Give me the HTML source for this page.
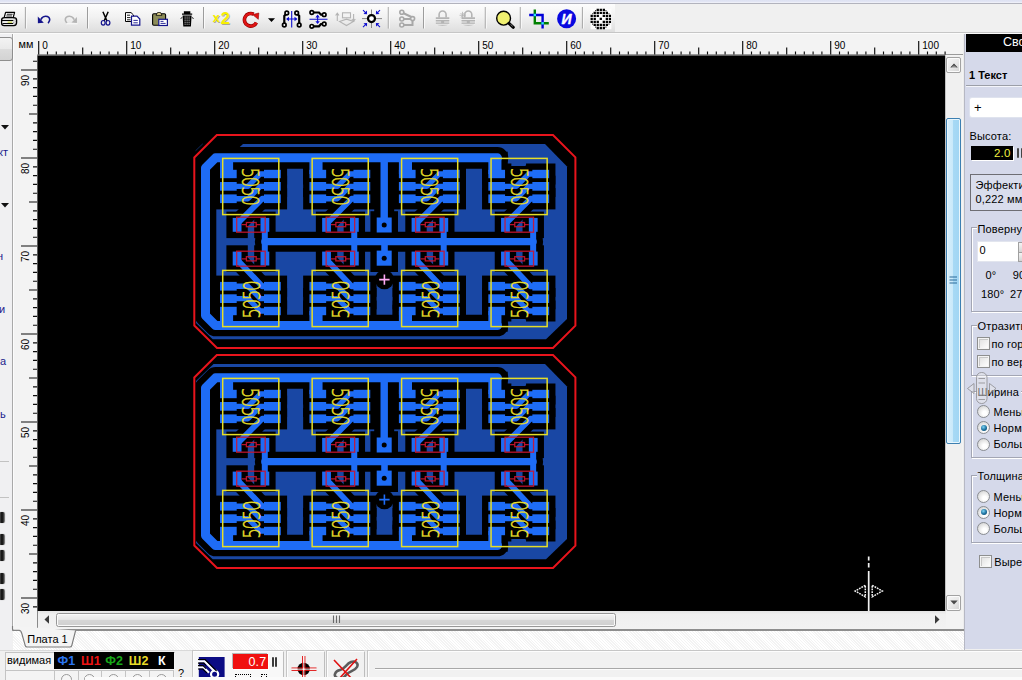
<!DOCTYPE html>
<html lang="ru"><head><meta charset="utf-8"><title>Sprint-Layout</title>
<style>
html,body{margin:0;padding:0}
body{width:1022px;height:680px;overflow:hidden;position:relative;background:#f0f0f0;font-family:"Liberation Sans",sans-serif;font-size:11px;color:#000}
.abs{position:absolute}
#top0{left:0;top:0;width:1022px;height:3px;background:linear-gradient(#dde1f2,#e2e5f4 50%,#f3f4fa)}
#top1{left:0;top:2.8px;width:1022px;height:1px;background:#b2b3bd}
#tb{left:0;top:4px;width:615px;height:28px;background:linear-gradient(#fdfdfd,#f2f2f2 45%,#dedede)}
#tbline{left:0;top:32px;width:1022px;height:1px;background:#c6c6c6}
#tbline2{left:0;top:33px;width:1022px;height:1px;background:#fbfbfb}
#left{left:0;top:34px;width:12px;height:616px;background:#f0f0f2}
#leftline{left:12px;top:34px;width:1px;height:597px;background:#a9a9a9}
#leftline2{left:13px;top:34px;width:1px;height:596px;background:#fcfcfc}
#rul{left:14px;top:34px;width:950px;height:596px;background:#f3f3f3}
#lbtn{left:-3px;top:37px;width:14px;height:22px;border:1px solid #8e8e8e;border-radius:3px;background:linear-gradient(#f3f3f3,#e9e9e9 50%,#dcdcdc 51%,#d3d3d3)}
.nv{color:#1c1c8c}

#rp{left:965px;top:34px;width:57px;height:615px;background:#d5d9ea}
#rpl{left:964px;top:34px;width:1px;height:616px;background:#b6b8c4}
#rpl0{left:963px;top:34px;width:1px;height:616px;background:#ececec}
#rpt{left:966px;top:34px;width:56px;height:18px;background:#000;color:#fff;font-size:12.5px;line-height:17px;white-space:nowrap;overflow:hidden}
#rpt span{position:absolute;left:37px;top:0}
.rl{position:absolute;white-space:nowrap;font-size:11px;line-height:13px;letter-spacing:0.15px}
.gb{position:absolute;border:1px solid #a3a6b4;box-shadow:1px 1px 0 #fff, inset 1px 1px 0 #fff;border-right:none}
.gl{position:absolute;background:#d5d9ea;padding:0 2px 0 1px;white-space:nowrap;font-size:11px;line-height:13px;letter-spacing:0.15px}
.cb{position:absolute;width:11px;height:11px;border:1px solid #8e8f8f;background:linear-gradient(135deg,#dcdcdc,#f6f6f6 70%,#fff);box-shadow:inset 0 0 0 1px #f4f4f4, inset 2px 2px 0 0 #c8c8c8}
.rb{position:absolute;width:11px;height:11px;border-radius:50%;border:1px solid #8a8d92;background:radial-gradient(circle at 60% 65%,#fff 20%,#e4e4e4 60%,#c4c4c4)}
.rb.on:after{content:"";position:absolute;left:2.5px;top:2.5px;width:6px;height:6px;border-radius:50%;background:radial-gradient(circle at 40% 35%,#7fd4f4,#1a6e9c 55%,#0c3c5c)}
#vs{left:946px;top:56px;width:16px;height:555px;background:#f0f0f0}
.sbtn{position:absolute;border:1px solid #a2a2a2;border-radius:2px;background:linear-gradient(135deg,#f6f6f6,#e9e9e9 50%,#d2d2d2);box-shadow:inset 0 0 0 1px #fbfbfb}
#vth{left:946px;top:118px;width:13px;height:324px;border:1px solid #3c7fb1;border-radius:2px;background:linear-gradient(90deg,#d9effc,#c9e9fa 45%,#a7d9f5 50%,#a0d5f3);box-shadow:inset 0 0 0 1px #e8f6fd}
#hs{left:38px;top:611px;width:908px;height:17px;background:linear-gradient(#e4e4e4,#f0f0f0 20%,#f2f2f2)}
#hth{left:56px;top:612.5px;width:558px;height:12.5px;border:1px solid #979797;border-radius:2.5px;background:linear-gradient(#f4f4f4,#e8e8e8 45%,#d6d6d6 52%,#cfcfcf);box-shadow:inset 0 0 0 1px #fafafa}
#frm{left:13px;top:629px;width:951px;height:1.5px;background:#8e8e8e}
#tabs{left:13px;top:630.5px;width:951px;height:19.5px;background:repeating-linear-gradient(45deg,#ffffff 0,#ffffff 1px,#f3f3f3 1px,#f3f3f3 2px)}
#bot{left:0;top:650px;width:1022px;height:30px;background:#f0f0f0}
.bx{position:absolute;top:651px;height:30px;border:1px solid #fdfdfd;border-right-color:#bdbdbd;box-shadow:-1px -1px 0 #c6c6c6;background:#f1f1f1}
</style></head>
<body>
<div class="abs" id="top0"></div><div class="abs" id="top1"></div><div class="abs" id="tb"></div><div class="abs" id="tbline"></div><div class="abs" id="tbline2"></div>
<svg class="abs" style="left:0;top:0" width="640" height="36" viewBox="0 0 640 36"><path d="M25.4,7V28.5" stroke="#9c9c9c" stroke-width="1"/><path d="M26.4,7V28.5" stroke="#fafafa" stroke-width="1"/><path d="M87.5,7V28.5" stroke="#9c9c9c" stroke-width="1"/><path d="M88.5,7V28.5" stroke="#fafafa" stroke-width="1"/><path d="M203.5,7V28.5" stroke="#9c9c9c" stroke-width="1"/><path d="M204.5,7V28.5" stroke="#fafafa" stroke-width="1"/><path d="M388.3,7V28.5" stroke="#9c9c9c" stroke-width="1"/><path d="M389.3,7V28.5" stroke="#fafafa" stroke-width="1"/><path d="M423.5,7V28.5" stroke="#9c9c9c" stroke-width="1"/><path d="M424.5,7V28.5" stroke="#fafafa" stroke-width="1"/><path d="M485.3,7V28.5" stroke="#9c9c9c" stroke-width="1"/><path d="M486.3,7V28.5" stroke="#fafafa" stroke-width="1"/><path d="M520.3,7V28.5" stroke="#9c9c9c" stroke-width="1"/><path d="M521.3,7V28.5" stroke="#fafafa" stroke-width="1"/><path d="M582.4,7V28.5" stroke="#9c9c9c" stroke-width="1"/><path d="M583.4,7V28.5" stroke="#fafafa" stroke-width="1"/><g stroke="#000" stroke-linejoin="round"><path d="M4.2,17.5L5.6,12.4H14.6L13.2,17.5Z" fill="#fff" stroke-width="1.2"/><path d="M6.8,14.3H12.6M6.3,16H12" stroke="#222" stroke-width="1.1"/><path d="M1.6,20.2C1.6,18.4 2.8,17.6 4.4,17.6H13.4C15.4,17.6 16.6,18.4 16.6,20V22.6C16.6,24.6 15.6,25.6 13.8,25.6H4.2C2.4,25.6 1.6,24.6 1.6,23Z" fill="#e4e4e4" stroke-width="1.3"/><path d="M1.8,20.6H13.2M2.6,23.4H13.2" fill="none" stroke-width="1.1"/><path d="M13.4,18.5L16,19.5M13.4,20.5L16.2,21.5M13.4,22.5L16,23.5" stroke="#777" stroke-width="0.8" stroke-dasharray="0.9 0.7"/></g><rect x="2.6" y="21.3" width="10.4" height="1.5" fill="#fff"/><rect x="7.6" y="21.6" width="4.6" height="1.1" fill="#c8d838"/><path d="M40.8,19.6C42,16.8 45,15.7 47.4,16.6C50,17.6 50.7,20.4 48.1,23.2" fill="none" stroke="#14148c" stroke-width="1.6"/><path d="M37.8,16.6L43.8,22.7L37.9,23.2Z" fill="#14148c"/><path d="M74.2,19.6C73,16.8 70,15.7 67.6,16.6C65,17.6 64.3,20.4 66.9,23.2" fill="none" stroke="#b4b4b4" stroke-width="1.6"/><path d="M77,17L71.5,22.6L76.9,23Z" fill="#b4b4b4"/><path d="M66,23.8H77.5" stroke="#fff" stroke-width="0.8"/><path d="M102.9,11.8L107,21M108.2,11.8L104.1,21" stroke="#000" stroke-width="1.5" fill="none"/><ellipse cx="103.2" cy="22.8" rx="1.9" ry="2.3" fill="none" stroke="#14148c" stroke-width="1.2"/><ellipse cx="108" cy="22.8" rx="1.9" ry="2.3" fill="none" stroke="#14148c" stroke-width="1.2"/><path d="M125.5,12.6H131L133.5,15V21.5H125.5Z" fill="#fff" stroke="#000" stroke-width="1"/><path d="M127,15.2H130M127,17.6H130.5M127,19.8H130.5" stroke="#000" stroke-width="0.9"/><path d="M131.5,16.2H137L139.8,19V25.2H131.5Z" fill="#fff" stroke="#14148c" stroke-width="1.2"/><path d="M133.4,20.4H137.8M133.4,22.8H137.8" stroke="#14148c" stroke-width="0.9"/><rect x="152.6" y="13.8" width="13" height="11.4" rx="1.2" fill="#8c8c58" stroke="#000" stroke-width="1.1"/><path d="M156,15.3L157.5,12.6H160.6L162,15.3Z" fill="#e8d890" stroke="#000" stroke-width="0.8"/><rect x="158.8" y="19.3" width="8.6" height="6.2" fill="#fff" stroke="#14148c" stroke-width="1.2"/><path d="M160.5,21.4H163.5M160.5,23.4H165.6" stroke="#14148c" stroke-width="0.9"/><path d="M182,14.2H192.2M184.5,12H189.7V14H184.5Z" stroke="#000" stroke-width="1.3" fill="#000"/><path d="M182.6,15.5H191.6L190.9,26.6H183.3Z" fill="#000"/><path d="M185.1,16.5V25.5M187.1,16.5V25.5M189.1,16.5V25.5" stroke="#d8d8d8" stroke-width="0.8" stroke-dasharray="1.2 0.6"/><path d="M180.6,18.5L182.3,17.5M193.6,18.5L191.9,17.5" stroke="#000" stroke-width="0.9"/><text font-family="Liberation Sans, sans-serif" font-weight="bold" fill="#a8a898"><tspan x="213.6" y="23.2" font-size="12.5px">x</tspan><tspan x="221.6" y="24.8" font-size="16.5px">2</tspan></text><text font-family="Liberation Sans, sans-serif" font-weight="bold" fill="#f8f000"><tspan x="212.8" y="22.4" font-size="12.5px">x</tspan><tspan x="220.8" y="24.0" font-size="16.5px">2</tspan></text><path d="M256.4,22.6A6.3,6.3 0 1 1 253.6,14.2" fill="none" stroke="#900000" stroke-width="3.6"/><path d="M256.4,22.6A6.3,6.3 0 1 1 253.6,14.2" fill="none" stroke="#e01414" stroke-width="2.4"/><path d="M252.6,14.6L258.8,13L258.3,19.3Z" fill="#e01414" stroke="#900000" stroke-width="0.6"/><path d="M268,18.2H275L271.5,22Z" fill="#000"/><g fill="none" stroke="#000" stroke-width="2.2"><path d="M286.5,13.5L284.3,16V25M297,13.5L299.2,16V25"/></g><circle cx="286.8" cy="13.0" r="1.8" fill="#fff" stroke="#000" stroke-width="1.7"/><circle cx="284.3" cy="25.0" r="1.8" fill="#fff" stroke="#000" stroke-width="1.7"/><circle cx="296.7" cy="13.0" r="1.8" fill="#fff" stroke="#000" stroke-width="1.7"/><circle cx="299.2" cy="25.0" r="1.8" fill="#fff" stroke="#000" stroke-width="1.7"/><path d="M291.7,11V27.5M287,19H296.5" stroke="#1010d0" stroke-width="1.1"/><path d="M286,19L289,16.8V21.2ZM297.5,19L294.5,16.8V21.2Z" fill="#1010d0"/><g fill="none" stroke="#000" stroke-width="2.2"><path d="M311.5,12.5H319L321,14.7H324M311.5,26.3H319L321,24H324"/></g><circle cx="311.8" cy="12.5" r="1.8" fill="#fff" stroke="#000" stroke-width="1.7"/><circle cx="324.2" cy="14.7" r="1.8" fill="#fff" stroke="#000" stroke-width="1.7"/><circle cx="311.8" cy="26.3" r="1.8" fill="#fff" stroke="#000" stroke-width="1.7"/><circle cx="324.2" cy="24.0" r="1.8" fill="#fff" stroke="#000" stroke-width="1.7"/><path d="M309.5,19.3H327.5M317.6,15.5V23" stroke="#1010d0" stroke-width="1.1"/><path d="M317.6,14.6L315.4,17.4H319.8ZM317.6,24L315.4,21.2H319.8Z" fill="#1010d0"/><g fill="none" stroke="#b4b4b4" stroke-width="1.1"><rect x="342.5" y="12.8" width="8" height="5"/><path d="M339.5,21.5L346.5,19.2L353.5,21.5L346.5,25.5Z"/><path d="M337.3,21V13.5M335.6,15.5L337.3,13.2L339,15.5M353.6,14V20.5M351.9,19L353.6,21.3L355.3,19"/></g><path d="M371.5,9.5V28M362,18.6H382" stroke="#888" stroke-width="1"/><circle cx="371.5" cy="18.6" r="3.5" fill="#fff" stroke="#000" stroke-width="2.2"/><path d="M363.0,10.1L366.5,13.6" stroke="#1010d0" stroke-width="1.1"/><path d="M367.1,14.2L363.5,14.0L366.9,10.6Z" fill="#1010d0"/><path d="M380.0,10.1L376.5,13.6" stroke="#1010d0" stroke-width="1.1"/><path d="M375.9,14.2L379.5,14.0L376.1,10.6Z" fill="#1010d0"/><path d="M363.0,27.1L366.5,23.6" stroke="#1010d0" stroke-width="1.1"/><path d="M367.1,23.0L363.5,23.2L366.9,26.6Z" fill="#1010d0"/><path d="M380.0,27.1L376.5,23.6" stroke="#1010d0" stroke-width="1.1"/><path d="M375.9,23.0L379.5,23.2L376.1,26.6Z" fill="#1010d0"/><g fill="none" stroke="#a8a8a8" stroke-width="2"><path d="M402,12.5L412.5,17.5V25H402M402,19H410"/></g><circle cx="401.8" cy="12.3" r="2" fill="#f0f0f0" stroke="#a8a8a8" stroke-width="1.6"/><circle cx="401.8" cy="19.0" r="2" fill="#f0f0f0" stroke="#a8a8a8" stroke-width="1.6"/><circle cx="401.8" cy="25.0" r="2" fill="#f0f0f0" stroke="#a8a8a8" stroke-width="1.6"/><circle cx="412.6" cy="18.6" r="2" fill="#f0f0f0" stroke="#a8a8a8" stroke-width="1.6"/><path d="M439.1,17.5V14.5A3.2,3.2 0 0 1 446.1,14.5V17.5" fill="none" stroke="#b4b4b4" stroke-width="1.6"/><path d="M435.8,17.3H449.3V23.5C447.3,26.5 437.8,26.5 435.8,23.5Z" fill="#b4b4b4"/><path d="M435.3,19.5H450.3M435.3,22H450.3M436.3,24.3H449.3" stroke="#f4f4f4" stroke-width="0.9"/><rect x="441.1" y="20.5" width="3" height="2.6" fill="#b4b4b4"/><path d="M464.8,17.5V14.5A3.2,3.2 0 0 1 471.8,14.5V17.5" fill="none" stroke="#b4b4b4" stroke-width="1.6"/><path d="M461.5,17.3H475.0V23.5C473.0,26.5 463.5,26.5 461.5,23.5Z" fill="#b4b4b4"/><path d="M461.0,19.5H476.0M461.0,22H476.0M462.0,24.3H475.0" stroke="#f4f4f4" stroke-width="0.9"/><rect x="466.8" y="20.5" width="3" height="2.6" fill="#b4b4b4"/><path d="M460.5,13L464.5,17M464.5,12.5L461,17.5M459.5,15.3H465.5M462.5,11.8V18.3" stroke="#b4b4b4" stroke-width="0.8"/><circle cx="503.6" cy="18.2" r="6.9" fill="#f0f070" stroke="#000" stroke-width="1.4"/><path d="M509,23.3L513.3,27.3" stroke="#000" stroke-width="3" stroke-linecap="round"/><path d="M510.5,24.3L512.7,26.3" stroke="#aaa" stroke-width="0.8"/><path d="M534.8,9.5V23.3H548.8" fill="none" stroke="#008000" stroke-width="2.4"/><path d="M529.2,15H542.6V28.5" fill="none" stroke="#0000d8" stroke-width="2.4"/><rect x="533.6" y="13.8" width="2.4" height="2.4" fill="#30e8f0"/><rect x="541.4" y="22.1" width="2.4" height="2.4" fill="#30e8f0"/><circle cx="566.6" cy="18.8" r="9.5" fill="#0808e0"/><text x="566.6" y="24" text-anchor="middle" font-family="Liberation Sans, sans-serif" font-weight="bold" font-style="italic" font-size="14px" fill="#fff" stroke="#fff" stroke-width="0.4">И</text><rect x="590.6" y="8.6" width="20.8" height="20.6" fill="#fdfdfd"/><path d="M596.61,8.65h2.3v2.3h-2.3zM599.64,8.65h2.3v2.3h-2.3zM602.67,8.65h2.3v2.3h-2.3zM593.58,11.68h2.3v2.3h-2.3zM596.61,11.68h2.3v2.3h-2.3zM599.64,11.68h2.3v2.3h-2.3zM602.67,11.68h2.3v2.3h-2.3zM605.70,11.68h2.3v2.3h-2.3zM590.55,14.71h2.3v2.3h-2.3zM593.58,14.71h2.3v2.3h-2.3zM596.61,14.71h2.3v2.3h-2.3zM602.67,14.71h2.3v2.3h-2.3zM605.70,14.71h2.3v2.3h-2.3zM608.73,14.71h2.3v2.3h-2.3zM590.55,17.74h2.3v2.3h-2.3zM593.58,17.74h2.3v2.3h-2.3zM599.64,17.74h2.3v2.3h-2.3zM605.70,17.74h2.3v2.3h-2.3zM608.73,17.74h2.3v2.3h-2.3zM590.55,20.77h2.3v2.3h-2.3zM593.58,20.77h2.3v2.3h-2.3zM596.61,20.77h2.3v2.3h-2.3zM602.67,20.77h2.3v2.3h-2.3zM605.70,20.77h2.3v2.3h-2.3zM608.73,20.77h2.3v2.3h-2.3zM593.58,23.80h2.3v2.3h-2.3zM596.61,23.80h2.3v2.3h-2.3zM599.64,23.80h2.3v2.3h-2.3zM602.67,23.80h2.3v2.3h-2.3zM605.70,23.80h2.3v2.3h-2.3zM596.61,26.83h2.3v2.3h-2.3zM599.64,26.83h2.3v2.3h-2.3zM602.67,26.83h2.3v2.3h-2.3z" fill="#000"/><path d="M595.03,10.10h1.2v1.2h-1.2zM605.35,10.10h1.2v1.2h-1.2zM592.00,13.13h1.2v1.2h-1.2zM608.38,13.13h1.2v1.2h-1.2zM592.00,23.45h1.2v1.2h-1.2zM608.38,23.45h1.2v1.2h-1.2zM595.03,26.48h1.2v1.2h-1.2zM605.35,26.48h1.2v1.2h-1.2z" fill="#444"/></svg>
<div class="abs" id="rul"></div><div class="abs" style="left:36.5px;top:54.3px;width:926px;height:1.2px;background:#9a9a9a"></div><div class="abs" style="left:36.5px;top:54.3px;width:1px;height:575px;background:#b0b0b0"></div>
<div class="abs" id="left"></div><div class="abs" id="leftline"></div><div class="abs" id="leftline2"></div><div class="abs" id="lbtn"></div><svg class="abs" style="left:1px;top:124.5px" width="8" height="5"><path d="M0,0H8L4,4.5Z" fill="#111"/></svg><svg class="abs" style="left:1px;top:202.5px" width="8" height="5"><path d="M0,0H8L4,4.5Z" fill="#111"/></svg><div class="abs nv" style="left:-2px;top:146px;font-size:11px">кт</div><div class="abs nv" style="left:-3px;top:250px;font-size:11px">н</div><div class="abs nv" style="left:-1px;top:303px;font-size:11px">и</div><div class="abs nv" style="left:0px;top:355px;font-size:11px">а</div><div class="abs nv" style="left:0px;top:408px;font-size:11px">ь</div><div class="abs" style="left:0;top:461px;width:9px;height:1px;background:#c2c2c2"></div><div class="abs" style="left:0;top:497px;width:9px;height:1px;background:#c2c2c2"></div><div class="abs" style="left:-1px;top:512.3px;width:5.5px;height:11px;border-radius:2px;background:linear-gradient(90deg,#8a8a8a,#2a2a2a 30%,#0c0c0c 50%,#3a3a3a 75%,#9a9a9a);box-shadow:0 0 1px #888"></div><div class="abs" style="left:-1px;top:533.5px;width:5.5px;height:11px;border-radius:2px;background:linear-gradient(90deg,#8a8a8a,#2a2a2a 30%,#0c0c0c 50%,#3a3a3a 75%,#9a9a9a);box-shadow:0 0 1px #888"></div><div class="abs" style="left:-1px;top:550.4px;width:5.5px;height:11px;border-radius:2px;background:linear-gradient(90deg,#8a8a8a,#2a2a2a 30%,#0c0c0c 50%,#3a3a3a 75%,#9a9a9a);box-shadow:0 0 1px #888"></div><div class="abs" style="left:-1px;top:573px;width:5.5px;height:11px;border-radius:2px;background:linear-gradient(90deg,#8a8a8a,#2a2a2a 30%,#0c0c0c 50%,#3a3a3a 75%,#9a9a9a);box-shadow:0 0 1px #888"></div><div class="abs" style="left:-1px;top:589px;width:5.5px;height:11px;border-radius:2px;background:linear-gradient(90deg,#8a8a8a,#2a2a2a 30%,#0c0c0c 50%,#3a3a3a 75%,#9a9a9a);box-shadow:0 0 1px #888"></div>
<svg id="pcb" width="909" height="556" viewBox="37 55 909 556" style="position:absolute;left:37px;top:55px"><rect x="37.5" y="55.4" width="907.7" height="555.6" fill="#000"/><style>
.clr path{fill:none;stroke:#000;stroke-linecap:round;stroke-linejoin:round}
.clr .pc{fill:#000;stroke:#000;stroke-width:12.6;stroke-linejoin:miter}
.cu path{fill:none;stroke:#1e6cf6;stroke-linecap:round;stroke-linejoin:round}
.cu .pp{fill:#1e6cf6}
.rs{fill:none;stroke:#cc1430;stroke-width:1.3;opacity:0.9}
.yb{fill:none;stroke:#e6de28;stroke-width:1.5}
.lt{font-family:"DejaVu Sans Light","DejaVu Sans","Liberation Sans",sans-serif;font-weight:200;font-size:23.4px;letter-spacing:-2px;fill:#e6de28;stroke:#e6de28;stroke-width:0.55}
</style><g><polygon points="243,144 545,144 567,166.5 567,319 546,339.3 212.7,339.3 196,323 196,187.5" fill="#1947a4"/>
<g class="clr"><path d="M497.5,157.85 L215.5,157.85 L205.5,167.85 L205.5,315.55 L215.5,325.55 L497.5,325.55" stroke-width="21.6"/><rect x="220" y="158" width="13.1" height="16" class="pc"/><rect x="231.9" y="166" width="34" height="38" fill="#000" stroke="none"/><rect x="220" y="169.8" width="16.7" height="8.4" class="pc"/><rect x="264" y="169.8" width="16.8" height="8.4" class="pc"/><rect x="220" y="182" width="16.7" height="8.7" class="pc"/><rect x="264" y="182" width="16.8" height="8.7" class="pc"/><rect x="220" y="194.4" width="16.7" height="8.7" class="pc"/><rect x="264" y="194.4" width="16.8" height="8.7" class="pc"/><path d="M235.9,186.35 L248,186.35 L260.3,174 L266.9,174" stroke-width="17.9"/><path d="M235.9,198.75 L248,198.75 L260.3,186.35 L266.9,186.35" stroke-width="17.9"/><path d="M267.9,198.75 L262.2,198.75 L236.7,224.25" stroke-width="18.4"/><rect x="232.7" y="217.9" width="8.8" height="13.9" class="pc"/><rect x="260.5" y="217.9" width="8.8" height="13.9" class="pc"/><rect x="220" y="311" width="13.1" height="14.4" class="pc"/><rect x="231.9" y="281" width="34" height="38" fill="#000" stroke="none"/><rect x="220" y="306.8" width="16.7" height="8.4" class="pc"/><rect x="264" y="306.8" width="16.8" height="8.4" class="pc"/><rect x="220" y="294.3" width="16.7" height="8.7" class="pc"/><rect x="264" y="294.3" width="16.8" height="8.7" class="pc"/><rect x="220" y="281.9" width="16.7" height="8.7" class="pc"/><rect x="264" y="281.9" width="16.8" height="8.7" class="pc"/><path d="M235.9,298.65 L248,298.65 L260.3,311 L266.9,311" stroke-width="17.9"/><path d="M235.9,286.25 L248,286.25 L260.3,298.65 L266.9,298.65" stroke-width="17.9"/><path d="M267.9,286.25 L262.2,286.25 L236.7,259.15" stroke-width="18.4"/><rect x="232.7" y="251.6" width="8.8" height="13.9" class="pc"/><rect x="260.5" y="251.6" width="8.8" height="13.9" class="pc"/><path d="M264.8,224.8 L264.8,258.6" stroke-width="18.6"/><rect x="309.45" y="158" width="13.1" height="16" class="pc"/><rect x="321.35" y="166" width="34" height="38" fill="#000" stroke="none"/><rect x="309.45" y="169.8" width="16.7" height="8.4" class="pc"/><rect x="353.45" y="169.8" width="16.8" height="8.4" class="pc"/><rect x="309.45" y="182" width="16.7" height="8.7" class="pc"/><rect x="353.45" y="182" width="16.8" height="8.7" class="pc"/><rect x="309.45" y="194.4" width="16.7" height="8.7" class="pc"/><rect x="353.45" y="194.4" width="16.8" height="8.7" class="pc"/><path d="M325.35,186.35 L337.45,186.35 L349.75,174 L356.35,174" stroke-width="17.9"/><path d="M325.35,198.75 L337.45,198.75 L349.75,186.35 L356.35,186.35" stroke-width="17.9"/><path d="M357.35,198.75 L351.65,198.75 L326.15,224.25" stroke-width="18.4"/><rect x="322.15" y="217.9" width="8.8" height="13.9" class="pc"/><rect x="349.95" y="217.9" width="8.8" height="13.9" class="pc"/><rect x="309.45" y="311" width="13.1" height="14.4" class="pc"/><rect x="321.35" y="281" width="34" height="38" fill="#000" stroke="none"/><rect x="309.45" y="306.8" width="16.7" height="8.4" class="pc"/><rect x="353.45" y="306.8" width="16.8" height="8.4" class="pc"/><rect x="309.45" y="294.3" width="16.7" height="8.7" class="pc"/><rect x="353.45" y="294.3" width="16.8" height="8.7" class="pc"/><rect x="309.45" y="281.9" width="16.7" height="8.7" class="pc"/><rect x="353.45" y="281.9" width="16.8" height="8.7" class="pc"/><path d="M325.35,298.65 L337.45,298.65 L349.75,311 L356.35,311" stroke-width="17.9"/><path d="M325.35,286.25 L337.45,286.25 L349.75,298.65 L356.35,298.65" stroke-width="17.9"/><path d="M357.35,286.25 L351.65,286.25 L326.15,259.15" stroke-width="18.4"/><rect x="322.15" y="251.6" width="8.8" height="13.9" class="pc"/><rect x="349.95" y="251.6" width="8.8" height="13.9" class="pc"/><path d="M354.25,224.8 L354.25,258.6" stroke-width="18.6"/><rect x="398.9" y="158" width="13.1" height="16" class="pc"/><rect x="410.8" y="166" width="34" height="38" fill="#000" stroke="none"/><rect x="398.9" y="169.8" width="16.7" height="8.4" class="pc"/><rect x="442.9" y="169.8" width="16.8" height="8.4" class="pc"/><rect x="398.9" y="182" width="16.7" height="8.7" class="pc"/><rect x="442.9" y="182" width="16.8" height="8.7" class="pc"/><rect x="398.9" y="194.4" width="16.7" height="8.7" class="pc"/><rect x="442.9" y="194.4" width="16.8" height="8.7" class="pc"/><path d="M414.8,186.35 L426.9,186.35 L439.2,174 L445.8,174" stroke-width="17.9"/><path d="M414.8,198.75 L426.9,198.75 L439.2,186.35 L445.8,186.35" stroke-width="17.9"/><path d="M446.8,198.75 L441.1,198.75 L415.6,224.25" stroke-width="18.4"/><rect x="411.6" y="217.9" width="8.8" height="13.9" class="pc"/><rect x="439.4" y="217.9" width="8.8" height="13.9" class="pc"/><rect x="398.9" y="311" width="13.1" height="14.4" class="pc"/><rect x="410.8" y="281" width="34" height="38" fill="#000" stroke="none"/><rect x="398.9" y="306.8" width="16.7" height="8.4" class="pc"/><rect x="442.9" y="306.8" width="16.8" height="8.4" class="pc"/><rect x="398.9" y="294.3" width="16.7" height="8.7" class="pc"/><rect x="442.9" y="294.3" width="16.8" height="8.7" class="pc"/><rect x="398.9" y="281.9" width="16.7" height="8.7" class="pc"/><rect x="442.9" y="281.9" width="16.8" height="8.7" class="pc"/><path d="M414.8,298.65 L426.9,298.65 L439.2,311 L445.8,311" stroke-width="17.9"/><path d="M414.8,286.25 L426.9,286.25 L439.2,298.65 L445.8,298.65" stroke-width="17.9"/><path d="M446.8,286.25 L441.1,286.25 L415.6,259.15" stroke-width="18.4"/><rect x="411.6" y="251.6" width="8.8" height="13.9" class="pc"/><rect x="439.4" y="251.6" width="8.8" height="13.9" class="pc"/><path d="M443.7,224.8 L443.7,258.6" stroke-width="18.6"/><rect x="488.35" y="158" width="13.1" height="16" class="pc"/><rect x="500.25" y="166" width="34" height="38" fill="#000" stroke="none"/><rect x="488.35" y="169.8" width="16.7" height="8.4" class="pc"/><rect x="532.35" y="169.8" width="16.8" height="8.4" class="pc"/><rect x="488.35" y="182" width="16.7" height="8.7" class="pc"/><rect x="532.35" y="182" width="16.8" height="8.7" class="pc"/><rect x="488.35" y="194.4" width="16.7" height="8.7" class="pc"/><rect x="532.35" y="194.4" width="16.8" height="8.7" class="pc"/><path d="M504.25,186.35 L516.35,186.35 L528.65,174 L535.25,174" stroke-width="17.9"/><path d="M504.25,198.75 L516.35,198.75 L528.65,186.35 L535.25,186.35" stroke-width="17.9"/><path d="M536.25,198.75 L530.55,198.75 L505.05,224.25" stroke-width="18.4"/><rect x="501.05" y="217.9" width="8.8" height="13.9" class="pc"/><rect x="528.85" y="217.9" width="8.8" height="13.9" class="pc"/><rect x="488.35" y="311" width="13.1" height="14.4" class="pc"/><rect x="500.25" y="281" width="34" height="38" fill="#000" stroke="none"/><rect x="488.35" y="306.8" width="16.7" height="8.4" class="pc"/><rect x="532.35" y="306.8" width="16.8" height="8.4" class="pc"/><rect x="488.35" y="294.3" width="16.7" height="8.7" class="pc"/><rect x="532.35" y="294.3" width="16.8" height="8.7" class="pc"/><rect x="488.35" y="281.9" width="16.7" height="8.7" class="pc"/><rect x="532.35" y="281.9" width="16.8" height="8.7" class="pc"/><path d="M504.25,298.65 L516.35,298.65 L528.65,311 L535.25,311" stroke-width="17.9"/><path d="M504.25,286.25 L516.35,286.25 L528.65,298.65 L535.25,298.65" stroke-width="17.9"/><path d="M536.25,286.25 L530.55,286.25 L505.05,259.15" stroke-width="18.4"/><rect x="501.05" y="251.6" width="8.8" height="13.9" class="pc"/><rect x="528.85" y="251.6" width="8.8" height="13.9" class="pc"/><path d="M533.15,224.8 L533.15,258.6" stroke-width="18.6"/><path d="M264.8,241.7 L533.15,241.7" stroke-width="19.9"/><path d="M384.2,158 L384.2,225" stroke-width="20"/><rect x="376.7" y="217.5" width="15" height="15" class="pc"/><rect x="376.7" y="250.6" width="15" height="15.1" class="pc"/><path d="M384.5,241.7 L384.5,258" stroke-width="19.2"/><circle cx="384.4" cy="279.6" r="9.6" fill="#000" stroke="none"/></g>
<g class="cu"><path d="M497.5,157.85 L215.5,157.85 L205.5,167.85 L205.5,315.55 L215.5,325.55 L497.5,325.55" stroke-width="9"/><rect x="220" y="158" width="13.1" height="16" class="pp"/><rect x="220" y="169.8" width="16.7" height="8.4" class="pp"/><rect x="264" y="169.8" width="16.8" height="8.4" class="pp"/><rect x="220" y="182" width="16.7" height="8.7" class="pp"/><rect x="264" y="182" width="16.8" height="8.7" class="pp"/><rect x="220" y="194.4" width="16.7" height="8.7" class="pp"/><rect x="264" y="194.4" width="16.8" height="8.7" class="pp"/><path d="M235.9,186.35 L248,186.35 L260.3,174 L266.9,174" stroke-width="5.3"/><path d="M235.9,198.75 L248,198.75 L260.3,186.35 L266.9,186.35" stroke-width="5.3"/><path d="M267.9,198.75 L262.2,198.75 L236.7,224.25" stroke-width="5.8"/><rect x="232.7" y="217.9" width="8.8" height="13.9" class="pp"/><rect x="260.5" y="217.9" width="8.8" height="13.9" class="pp"/><rect x="220" y="311" width="13.1" height="14.4" class="pp"/><rect x="220" y="306.8" width="16.7" height="8.4" class="pp"/><rect x="264" y="306.8" width="16.8" height="8.4" class="pp"/><rect x="220" y="294.3" width="16.7" height="8.7" class="pp"/><rect x="264" y="294.3" width="16.8" height="8.7" class="pp"/><rect x="220" y="281.9" width="16.7" height="8.7" class="pp"/><rect x="264" y="281.9" width="16.8" height="8.7" class="pp"/><path d="M235.9,298.65 L248,298.65 L260.3,311 L266.9,311" stroke-width="5.3"/><path d="M235.9,286.25 L248,286.25 L260.3,298.65 L266.9,298.65" stroke-width="5.3"/><path d="M267.9,286.25 L262.2,286.25 L236.7,259.15" stroke-width="5.8"/><rect x="232.7" y="251.6" width="8.8" height="13.9" class="pp"/><rect x="260.5" y="251.6" width="8.8" height="13.9" class="pp"/><path d="M264.8,224.8 L264.8,258.6" stroke-width="6"/><rect x="309.45" y="158" width="13.1" height="16" class="pp"/><rect x="309.45" y="169.8" width="16.7" height="8.4" class="pp"/><rect x="353.45" y="169.8" width="16.8" height="8.4" class="pp"/><rect x="309.45" y="182" width="16.7" height="8.7" class="pp"/><rect x="353.45" y="182" width="16.8" height="8.7" class="pp"/><rect x="309.45" y="194.4" width="16.7" height="8.7" class="pp"/><rect x="353.45" y="194.4" width="16.8" height="8.7" class="pp"/><path d="M325.35,186.35 L337.45,186.35 L349.75,174 L356.35,174" stroke-width="5.3"/><path d="M325.35,198.75 L337.45,198.75 L349.75,186.35 L356.35,186.35" stroke-width="5.3"/><path d="M357.35,198.75 L351.65,198.75 L326.15,224.25" stroke-width="5.8"/><rect x="322.15" y="217.9" width="8.8" height="13.9" class="pp"/><rect x="349.95" y="217.9" width="8.8" height="13.9" class="pp"/><rect x="309.45" y="311" width="13.1" height="14.4" class="pp"/><rect x="309.45" y="306.8" width="16.7" height="8.4" class="pp"/><rect x="353.45" y="306.8" width="16.8" height="8.4" class="pp"/><rect x="309.45" y="294.3" width="16.7" height="8.7" class="pp"/><rect x="353.45" y="294.3" width="16.8" height="8.7" class="pp"/><rect x="309.45" y="281.9" width="16.7" height="8.7" class="pp"/><rect x="353.45" y="281.9" width="16.8" height="8.7" class="pp"/><path d="M325.35,298.65 L337.45,298.65 L349.75,311 L356.35,311" stroke-width="5.3"/><path d="M325.35,286.25 L337.45,286.25 L349.75,298.65 L356.35,298.65" stroke-width="5.3"/><path d="M357.35,286.25 L351.65,286.25 L326.15,259.15" stroke-width="5.8"/><rect x="322.15" y="251.6" width="8.8" height="13.9" class="pp"/><rect x="349.95" y="251.6" width="8.8" height="13.9" class="pp"/><path d="M354.25,224.8 L354.25,258.6" stroke-width="6"/><rect x="398.9" y="158" width="13.1" height="16" class="pp"/><rect x="398.9" y="169.8" width="16.7" height="8.4" class="pp"/><rect x="442.9" y="169.8" width="16.8" height="8.4" class="pp"/><rect x="398.9" y="182" width="16.7" height="8.7" class="pp"/><rect x="442.9" y="182" width="16.8" height="8.7" class="pp"/><rect x="398.9" y="194.4" width="16.7" height="8.7" class="pp"/><rect x="442.9" y="194.4" width="16.8" height="8.7" class="pp"/><path d="M414.8,186.35 L426.9,186.35 L439.2,174 L445.8,174" stroke-width="5.3"/><path d="M414.8,198.75 L426.9,198.75 L439.2,186.35 L445.8,186.35" stroke-width="5.3"/><path d="M446.8,198.75 L441.1,198.75 L415.6,224.25" stroke-width="5.8"/><rect x="411.6" y="217.9" width="8.8" height="13.9" class="pp"/><rect x="439.4" y="217.9" width="8.8" height="13.9" class="pp"/><rect x="398.9" y="311" width="13.1" height="14.4" class="pp"/><rect x="398.9" y="306.8" width="16.7" height="8.4" class="pp"/><rect x="442.9" y="306.8" width="16.8" height="8.4" class="pp"/><rect x="398.9" y="294.3" width="16.7" height="8.7" class="pp"/><rect x="442.9" y="294.3" width="16.8" height="8.7" class="pp"/><rect x="398.9" y="281.9" width="16.7" height="8.7" class="pp"/><rect x="442.9" y="281.9" width="16.8" height="8.7" class="pp"/><path d="M414.8,298.65 L426.9,298.65 L439.2,311 L445.8,311" stroke-width="5.3"/><path d="M414.8,286.25 L426.9,286.25 L439.2,298.65 L445.8,298.65" stroke-width="5.3"/><path d="M446.8,286.25 L441.1,286.25 L415.6,259.15" stroke-width="5.8"/><rect x="411.6" y="251.6" width="8.8" height="13.9" class="pp"/><rect x="439.4" y="251.6" width="8.8" height="13.9" class="pp"/><path d="M443.7,224.8 L443.7,258.6" stroke-width="6"/><rect x="488.35" y="158" width="13.1" height="16" class="pp"/><rect x="488.35" y="169.8" width="16.7" height="8.4" class="pp"/><rect x="532.35" y="169.8" width="16.8" height="8.4" class="pp"/><rect x="488.35" y="182" width="16.7" height="8.7" class="pp"/><rect x="532.35" y="182" width="16.8" height="8.7" class="pp"/><rect x="488.35" y="194.4" width="16.7" height="8.7" class="pp"/><rect x="532.35" y="194.4" width="16.8" height="8.7" class="pp"/><path d="M504.25,186.35 L516.35,186.35 L528.65,174 L535.25,174" stroke-width="5.3"/><path d="M504.25,198.75 L516.35,198.75 L528.65,186.35 L535.25,186.35" stroke-width="5.3"/><path d="M536.25,198.75 L530.55,198.75 L505.05,224.25" stroke-width="5.8"/><rect x="501.05" y="217.9" width="8.8" height="13.9" class="pp"/><rect x="528.85" y="217.9" width="8.8" height="13.9" class="pp"/><rect x="488.35" y="311" width="13.1" height="14.4" class="pp"/><rect x="488.35" y="306.8" width="16.7" height="8.4" class="pp"/><rect x="532.35" y="306.8" width="16.8" height="8.4" class="pp"/><rect x="488.35" y="294.3" width="16.7" height="8.7" class="pp"/><rect x="532.35" y="294.3" width="16.8" height="8.7" class="pp"/><rect x="488.35" y="281.9" width="16.7" height="8.7" class="pp"/><rect x="532.35" y="281.9" width="16.8" height="8.7" class="pp"/><path d="M504.25,298.65 L516.35,298.65 L528.65,311 L535.25,311" stroke-width="5.3"/><path d="M504.25,286.25 L516.35,286.25 L528.65,298.65 L535.25,298.65" stroke-width="5.3"/><path d="M536.25,286.25 L530.55,286.25 L505.05,259.15" stroke-width="5.8"/><rect x="501.05" y="251.6" width="8.8" height="13.9" class="pp"/><rect x="528.85" y="251.6" width="8.8" height="13.9" class="pp"/><path d="M533.15,224.8 L533.15,258.6" stroke-width="6"/><path d="M264.8,241.7 L533.15,241.7" stroke-width="7.3"/><path d="M384.2,158 L384.2,225" stroke-width="7.4"/><rect x="376.7" y="217.5" width="15" height="15" class="pp"/><rect x="376.7" y="250.6" width="15" height="15.1" class="pp"/><path d="M384.5,241.7 L384.5,258" stroke-width="6.6"/></g>
<circle cx="384.2" cy="225" r="2.5" fill="#000"/><circle cx="384.2" cy="258.3" r="2.5" fill="#000"/>
<path d="M379.2,279.6H389.6M384.4,274.4V284.8" stroke="#ffa8f4" stroke-width="1.6" fill="none"/>
<rect x="236.7" y="217.2" width="28.5" height="15" class="rs"/><rect x="246.4" y="222.5" width="9.8" height="4.2" class="rs"/><path d="M241.5,224.6h4.9M256.2,224.6h4.3" class="rs"/><rect x="236.7" y="251.2" width="28.5" height="15" class="rs"/><rect x="246.4" y="256.7" width="9.8" height="4.2" class="rs"/><path d="M241.5,258.8h4.9M256.2,258.8h4.3" class="rs"/><rect x="222.7" y="158.4" width="56.1" height="56.2" class="yb"/><rect x="222.7" y="270.4" width="56.1" height="56.2" class="yb"/><text class="lt" transform="translate(242.4,167.4) rotate(90) scale(0.72,1)">5050</text><text class="lt" transform="translate(259.9,318.8) rotate(-90) scale(0.72,1)">5050</text><rect x="326.15" y="217.2" width="28.5" height="15" class="rs"/><rect x="335.85" y="222.5" width="9.8" height="4.2" class="rs"/><path d="M330.95,224.6h4.9M345.65,224.6h4.3" class="rs"/><rect x="326.15" y="251.2" width="28.5" height="15" class="rs"/><rect x="335.85" y="256.7" width="9.8" height="4.2" class="rs"/><path d="M330.95,258.8h4.9M345.65,258.8h4.3" class="rs"/><rect x="312.15" y="158.4" width="56.1" height="56.2" class="yb"/><rect x="312.15" y="270.4" width="56.1" height="56.2" class="yb"/><text class="lt" transform="translate(331.85,167.4) rotate(90) scale(0.72,1)">5050</text><text class="lt" transform="translate(349.35,318.8) rotate(-90) scale(0.72,1)">5050</text><rect x="415.6" y="217.2" width="28.5" height="15" class="rs"/><rect x="425.3" y="222.5" width="9.8" height="4.2" class="rs"/><path d="M420.4,224.6h4.9M435.1,224.6h4.3" class="rs"/><rect x="415.6" y="251.2" width="28.5" height="15" class="rs"/><rect x="425.3" y="256.7" width="9.8" height="4.2" class="rs"/><path d="M420.4,258.8h4.9M435.1,258.8h4.3" class="rs"/><rect x="401.6" y="158.4" width="56.1" height="56.2" class="yb"/><rect x="401.6" y="270.4" width="56.1" height="56.2" class="yb"/><text class="lt" transform="translate(421.3,167.4) rotate(90) scale(0.72,1)">5050</text><text class="lt" transform="translate(438.8,318.8) rotate(-90) scale(0.72,1)">5050</text><rect x="505.05" y="217.2" width="28.5" height="15" class="rs"/><rect x="514.75" y="222.5" width="9.8" height="4.2" class="rs"/><path d="M509.85,224.6h4.9M524.55,224.6h4.3" class="rs"/><rect x="505.05" y="251.2" width="28.5" height="15" class="rs"/><rect x="514.75" y="256.7" width="9.8" height="4.2" class="rs"/><path d="M509.85,258.8h4.9M524.55,258.8h4.3" class="rs"/><rect x="491.05" y="158.4" width="56.1" height="56.2" class="yb"/><rect x="491.05" y="270.4" width="56.1" height="56.2" class="yb"/><text class="lt" transform="translate(510.75,167.4) rotate(90) scale(0.72,1)">5050</text><text class="lt" transform="translate(528.25,318.8) rotate(-90) scale(0.72,1)">5050</text>
<polygon points="194.3,157.5 216.8,135 553,135 575.4,157.4 575.4,325.6 553,348 217,348 194.3,325.5" fill="none" stroke="#e8141c" stroke-width="2"/>
<path d="M195.5,150.8L202.8,143.8" stroke="#1947a4" stroke-width="0.8" opacity="0.7"/></g><g transform="translate(0,220)"><polygon points="213.5,144 545,144 567,166.5 567,319 546,339.3 212.7,339.3 196,323 196,161" fill="#1947a4"/>
<g class="clr"><path d="M497.5,157.85 L215.5,157.85 L205.5,167.85 L205.5,315.55 L215.5,325.55 L497.5,325.55" stroke-width="21.6"/><rect x="220" y="158" width="13.1" height="16" class="pc"/><rect x="231.9" y="166" width="34" height="38" fill="#000" stroke="none"/><rect x="220" y="169.8" width="16.7" height="8.4" class="pc"/><rect x="264" y="169.8" width="16.8" height="8.4" class="pc"/><rect x="220" y="182" width="16.7" height="8.7" class="pc"/><rect x="264" y="182" width="16.8" height="8.7" class="pc"/><rect x="220" y="194.4" width="16.7" height="8.7" class="pc"/><rect x="264" y="194.4" width="16.8" height="8.7" class="pc"/><path d="M235.9,186.35 L248,186.35 L260.3,174 L266.9,174" stroke-width="17.9"/><path d="M235.9,198.75 L248,198.75 L260.3,186.35 L266.9,186.35" stroke-width="17.9"/><path d="M267.9,198.75 L262.2,198.75 L236.7,224.25" stroke-width="18.4"/><rect x="232.7" y="217.9" width="8.8" height="13.9" class="pc"/><rect x="260.5" y="217.9" width="8.8" height="13.9" class="pc"/><rect x="220" y="311" width="13.1" height="14.4" class="pc"/><rect x="231.9" y="281" width="34" height="38" fill="#000" stroke="none"/><rect x="220" y="306.8" width="16.7" height="8.4" class="pc"/><rect x="264" y="306.8" width="16.8" height="8.4" class="pc"/><rect x="220" y="294.3" width="16.7" height="8.7" class="pc"/><rect x="264" y="294.3" width="16.8" height="8.7" class="pc"/><rect x="220" y="281.9" width="16.7" height="8.7" class="pc"/><rect x="264" y="281.9" width="16.8" height="8.7" class="pc"/><path d="M235.9,298.65 L248,298.65 L260.3,311 L266.9,311" stroke-width="17.9"/><path d="M235.9,286.25 L248,286.25 L260.3,298.65 L266.9,298.65" stroke-width="17.9"/><path d="M267.9,286.25 L262.2,286.25 L236.7,259.15" stroke-width="18.4"/><rect x="232.7" y="251.6" width="8.8" height="13.9" class="pc"/><rect x="260.5" y="251.6" width="8.8" height="13.9" class="pc"/><path d="M264.8,224.8 L264.8,258.6" stroke-width="18.6"/><rect x="309.45" y="158" width="13.1" height="16" class="pc"/><rect x="321.35" y="166" width="34" height="38" fill="#000" stroke="none"/><rect x="309.45" y="169.8" width="16.7" height="8.4" class="pc"/><rect x="353.45" y="169.8" width="16.8" height="8.4" class="pc"/><rect x="309.45" y="182" width="16.7" height="8.7" class="pc"/><rect x="353.45" y="182" width="16.8" height="8.7" class="pc"/><rect x="309.45" y="194.4" width="16.7" height="8.7" class="pc"/><rect x="353.45" y="194.4" width="16.8" height="8.7" class="pc"/><path d="M325.35,186.35 L337.45,186.35 L349.75,174 L356.35,174" stroke-width="17.9"/><path d="M325.35,198.75 L337.45,198.75 L349.75,186.35 L356.35,186.35" stroke-width="17.9"/><path d="M357.35,198.75 L351.65,198.75 L326.15,224.25" stroke-width="18.4"/><rect x="322.15" y="217.9" width="8.8" height="13.9" class="pc"/><rect x="349.95" y="217.9" width="8.8" height="13.9" class="pc"/><rect x="309.45" y="311" width="13.1" height="14.4" class="pc"/><rect x="321.35" y="281" width="34" height="38" fill="#000" stroke="none"/><rect x="309.45" y="306.8" width="16.7" height="8.4" class="pc"/><rect x="353.45" y="306.8" width="16.8" height="8.4" class="pc"/><rect x="309.45" y="294.3" width="16.7" height="8.7" class="pc"/><rect x="353.45" y="294.3" width="16.8" height="8.7" class="pc"/><rect x="309.45" y="281.9" width="16.7" height="8.7" class="pc"/><rect x="353.45" y="281.9" width="16.8" height="8.7" class="pc"/><path d="M325.35,298.65 L337.45,298.65 L349.75,311 L356.35,311" stroke-width="17.9"/><path d="M325.35,286.25 L337.45,286.25 L349.75,298.65 L356.35,298.65" stroke-width="17.9"/><path d="M357.35,286.25 L351.65,286.25 L326.15,259.15" stroke-width="18.4"/><rect x="322.15" y="251.6" width="8.8" height="13.9" class="pc"/><rect x="349.95" y="251.6" width="8.8" height="13.9" class="pc"/><path d="M354.25,224.8 L354.25,258.6" stroke-width="18.6"/><rect x="398.9" y="158" width="13.1" height="16" class="pc"/><rect x="410.8" y="166" width="34" height="38" fill="#000" stroke="none"/><rect x="398.9" y="169.8" width="16.7" height="8.4" class="pc"/><rect x="442.9" y="169.8" width="16.8" height="8.4" class="pc"/><rect x="398.9" y="182" width="16.7" height="8.7" class="pc"/><rect x="442.9" y="182" width="16.8" height="8.7" class="pc"/><rect x="398.9" y="194.4" width="16.7" height="8.7" class="pc"/><rect x="442.9" y="194.4" width="16.8" height="8.7" class="pc"/><path d="M414.8,186.35 L426.9,186.35 L439.2,174 L445.8,174" stroke-width="17.9"/><path d="M414.8,198.75 L426.9,198.75 L439.2,186.35 L445.8,186.35" stroke-width="17.9"/><path d="M446.8,198.75 L441.1,198.75 L415.6,224.25" stroke-width="18.4"/><rect x="411.6" y="217.9" width="8.8" height="13.9" class="pc"/><rect x="439.4" y="217.9" width="8.8" height="13.9" class="pc"/><rect x="398.9" y="311" width="13.1" height="14.4" class="pc"/><rect x="410.8" y="281" width="34" height="38" fill="#000" stroke="none"/><rect x="398.9" y="306.8" width="16.7" height="8.4" class="pc"/><rect x="442.9" y="306.8" width="16.8" height="8.4" class="pc"/><rect x="398.9" y="294.3" width="16.7" height="8.7" class="pc"/><rect x="442.9" y="294.3" width="16.8" height="8.7" class="pc"/><rect x="398.9" y="281.9" width="16.7" height="8.7" class="pc"/><rect x="442.9" y="281.9" width="16.8" height="8.7" class="pc"/><path d="M414.8,298.65 L426.9,298.65 L439.2,311 L445.8,311" stroke-width="17.9"/><path d="M414.8,286.25 L426.9,286.25 L439.2,298.65 L445.8,298.65" stroke-width="17.9"/><path d="M446.8,286.25 L441.1,286.25 L415.6,259.15" stroke-width="18.4"/><rect x="411.6" y="251.6" width="8.8" height="13.9" class="pc"/><rect x="439.4" y="251.6" width="8.8" height="13.9" class="pc"/><path d="M443.7,224.8 L443.7,258.6" stroke-width="18.6"/><rect x="488.35" y="158" width="13.1" height="16" class="pc"/><rect x="500.25" y="166" width="34" height="38" fill="#000" stroke="none"/><rect x="488.35" y="169.8" width="16.7" height="8.4" class="pc"/><rect x="532.35" y="169.8" width="16.8" height="8.4" class="pc"/><rect x="488.35" y="182" width="16.7" height="8.7" class="pc"/><rect x="532.35" y="182" width="16.8" height="8.7" class="pc"/><rect x="488.35" y="194.4" width="16.7" height="8.7" class="pc"/><rect x="532.35" y="194.4" width="16.8" height="8.7" class="pc"/><path d="M504.25,186.35 L516.35,186.35 L528.65,174 L535.25,174" stroke-width="17.9"/><path d="M504.25,198.75 L516.35,198.75 L528.65,186.35 L535.25,186.35" stroke-width="17.9"/><path d="M536.25,198.75 L530.55,198.75 L505.05,224.25" stroke-width="18.4"/><rect x="501.05" y="217.9" width="8.8" height="13.9" class="pc"/><rect x="528.85" y="217.9" width="8.8" height="13.9" class="pc"/><rect x="488.35" y="311" width="13.1" height="14.4" class="pc"/><rect x="500.25" y="281" width="34" height="38" fill="#000" stroke="none"/><rect x="488.35" y="306.8" width="16.7" height="8.4" class="pc"/><rect x="532.35" y="306.8" width="16.8" height="8.4" class="pc"/><rect x="488.35" y="294.3" width="16.7" height="8.7" class="pc"/><rect x="532.35" y="294.3" width="16.8" height="8.7" class="pc"/><rect x="488.35" y="281.9" width="16.7" height="8.7" class="pc"/><rect x="532.35" y="281.9" width="16.8" height="8.7" class="pc"/><path d="M504.25,298.65 L516.35,298.65 L528.65,311 L535.25,311" stroke-width="17.9"/><path d="M504.25,286.25 L516.35,286.25 L528.65,298.65 L535.25,298.65" stroke-width="17.9"/><path d="M536.25,286.25 L530.55,286.25 L505.05,259.15" stroke-width="18.4"/><rect x="501.05" y="251.6" width="8.8" height="13.9" class="pc"/><rect x="528.85" y="251.6" width="8.8" height="13.9" class="pc"/><path d="M533.15,224.8 L533.15,258.6" stroke-width="18.6"/><path d="M264.8,241.7 L533.15,241.7" stroke-width="19.9"/><path d="M384.2,158 L384.2,225" stroke-width="20"/><rect x="376.7" y="217.5" width="15" height="15" class="pc"/><rect x="376.7" y="250.6" width="15" height="15.1" class="pc"/><path d="M384.5,241.7 L384.5,258" stroke-width="19.2"/><circle cx="384.4" cy="279.6" r="9.6" fill="#000" stroke="none"/></g>
<g class="cu"><path d="M497.5,157.85 L215.5,157.85 L205.5,167.85 L205.5,315.55 L215.5,325.55 L497.5,325.55" stroke-width="9"/><rect x="220" y="158" width="13.1" height="16" class="pp"/><rect x="220" y="169.8" width="16.7" height="8.4" class="pp"/><rect x="264" y="169.8" width="16.8" height="8.4" class="pp"/><rect x="220" y="182" width="16.7" height="8.7" class="pp"/><rect x="264" y="182" width="16.8" height="8.7" class="pp"/><rect x="220" y="194.4" width="16.7" height="8.7" class="pp"/><rect x="264" y="194.4" width="16.8" height="8.7" class="pp"/><path d="M235.9,186.35 L248,186.35 L260.3,174 L266.9,174" stroke-width="5.3"/><path d="M235.9,198.75 L248,198.75 L260.3,186.35 L266.9,186.35" stroke-width="5.3"/><path d="M267.9,198.75 L262.2,198.75 L236.7,224.25" stroke-width="5.8"/><rect x="232.7" y="217.9" width="8.8" height="13.9" class="pp"/><rect x="260.5" y="217.9" width="8.8" height="13.9" class="pp"/><rect x="220" y="311" width="13.1" height="14.4" class="pp"/><rect x="220" y="306.8" width="16.7" height="8.4" class="pp"/><rect x="264" y="306.8" width="16.8" height="8.4" class="pp"/><rect x="220" y="294.3" width="16.7" height="8.7" class="pp"/><rect x="264" y="294.3" width="16.8" height="8.7" class="pp"/><rect x="220" y="281.9" width="16.7" height="8.7" class="pp"/><rect x="264" y="281.9" width="16.8" height="8.7" class="pp"/><path d="M235.9,298.65 L248,298.65 L260.3,311 L266.9,311" stroke-width="5.3"/><path d="M235.9,286.25 L248,286.25 L260.3,298.65 L266.9,298.65" stroke-width="5.3"/><path d="M267.9,286.25 L262.2,286.25 L236.7,259.15" stroke-width="5.8"/><rect x="232.7" y="251.6" width="8.8" height="13.9" class="pp"/><rect x="260.5" y="251.6" width="8.8" height="13.9" class="pp"/><path d="M264.8,224.8 L264.8,258.6" stroke-width="6"/><rect x="309.45" y="158" width="13.1" height="16" class="pp"/><rect x="309.45" y="169.8" width="16.7" height="8.4" class="pp"/><rect x="353.45" y="169.8" width="16.8" height="8.4" class="pp"/><rect x="309.45" y="182" width="16.7" height="8.7" class="pp"/><rect x="353.45" y="182" width="16.8" height="8.7" class="pp"/><rect x="309.45" y="194.4" width="16.7" height="8.7" class="pp"/><rect x="353.45" y="194.4" width="16.8" height="8.7" class="pp"/><path d="M325.35,186.35 L337.45,186.35 L349.75,174 L356.35,174" stroke-width="5.3"/><path d="M325.35,198.75 L337.45,198.75 L349.75,186.35 L356.35,186.35" stroke-width="5.3"/><path d="M357.35,198.75 L351.65,198.75 L326.15,224.25" stroke-width="5.8"/><rect x="322.15" y="217.9" width="8.8" height="13.9" class="pp"/><rect x="349.95" y="217.9" width="8.8" height="13.9" class="pp"/><rect x="309.45" y="311" width="13.1" height="14.4" class="pp"/><rect x="309.45" y="306.8" width="16.7" height="8.4" class="pp"/><rect x="353.45" y="306.8" width="16.8" height="8.4" class="pp"/><rect x="309.45" y="294.3" width="16.7" height="8.7" class="pp"/><rect x="353.45" y="294.3" width="16.8" height="8.7" class="pp"/><rect x="309.45" y="281.9" width="16.7" height="8.7" class="pp"/><rect x="353.45" y="281.9" width="16.8" height="8.7" class="pp"/><path d="M325.35,298.65 L337.45,298.65 L349.75,311 L356.35,311" stroke-width="5.3"/><path d="M325.35,286.25 L337.45,286.25 L349.75,298.65 L356.35,298.65" stroke-width="5.3"/><path d="M357.35,286.25 L351.65,286.25 L326.15,259.15" stroke-width="5.8"/><rect x="322.15" y="251.6" width="8.8" height="13.9" class="pp"/><rect x="349.95" y="251.6" width="8.8" height="13.9" class="pp"/><path d="M354.25,224.8 L354.25,258.6" stroke-width="6"/><rect x="398.9" y="158" width="13.1" height="16" class="pp"/><rect x="398.9" y="169.8" width="16.7" height="8.4" class="pp"/><rect x="442.9" y="169.8" width="16.8" height="8.4" class="pp"/><rect x="398.9" y="182" width="16.7" height="8.7" class="pp"/><rect x="442.9" y="182" width="16.8" height="8.7" class="pp"/><rect x="398.9" y="194.4" width="16.7" height="8.7" class="pp"/><rect x="442.9" y="194.4" width="16.8" height="8.7" class="pp"/><path d="M414.8,186.35 L426.9,186.35 L439.2,174 L445.8,174" stroke-width="5.3"/><path d="M414.8,198.75 L426.9,198.75 L439.2,186.35 L445.8,186.35" stroke-width="5.3"/><path d="M446.8,198.75 L441.1,198.75 L415.6,224.25" stroke-width="5.8"/><rect x="411.6" y="217.9" width="8.8" height="13.9" class="pp"/><rect x="439.4" y="217.9" width="8.8" height="13.9" class="pp"/><rect x="398.9" y="311" width="13.1" height="14.4" class="pp"/><rect x="398.9" y="306.8" width="16.7" height="8.4" class="pp"/><rect x="442.9" y="306.8" width="16.8" height="8.4" class="pp"/><rect x="398.9" y="294.3" width="16.7" height="8.7" class="pp"/><rect x="442.9" y="294.3" width="16.8" height="8.7" class="pp"/><rect x="398.9" y="281.9" width="16.7" height="8.7" class="pp"/><rect x="442.9" y="281.9" width="16.8" height="8.7" class="pp"/><path d="M414.8,298.65 L426.9,298.65 L439.2,311 L445.8,311" stroke-width="5.3"/><path d="M414.8,286.25 L426.9,286.25 L439.2,298.65 L445.8,298.65" stroke-width="5.3"/><path d="M446.8,286.25 L441.1,286.25 L415.6,259.15" stroke-width="5.8"/><rect x="411.6" y="251.6" width="8.8" height="13.9" class="pp"/><rect x="439.4" y="251.6" width="8.8" height="13.9" class="pp"/><path d="M443.7,224.8 L443.7,258.6" stroke-width="6"/><rect x="488.35" y="158" width="13.1" height="16" class="pp"/><rect x="488.35" y="169.8" width="16.7" height="8.4" class="pp"/><rect x="532.35" y="169.8" width="16.8" height="8.4" class="pp"/><rect x="488.35" y="182" width="16.7" height="8.7" class="pp"/><rect x="532.35" y="182" width="16.8" height="8.7" class="pp"/><rect x="488.35" y="194.4" width="16.7" height="8.7" class="pp"/><rect x="532.35" y="194.4" width="16.8" height="8.7" class="pp"/><path d="M504.25,186.35 L516.35,186.35 L528.65,174 L535.25,174" stroke-width="5.3"/><path d="M504.25,198.75 L516.35,198.75 L528.65,186.35 L535.25,186.35" stroke-width="5.3"/><path d="M536.25,198.75 L530.55,198.75 L505.05,224.25" stroke-width="5.8"/><rect x="501.05" y="217.9" width="8.8" height="13.9" class="pp"/><rect x="528.85" y="217.9" width="8.8" height="13.9" class="pp"/><rect x="488.35" y="311" width="13.1" height="14.4" class="pp"/><rect x="488.35" y="306.8" width="16.7" height="8.4" class="pp"/><rect x="532.35" y="306.8" width="16.8" height="8.4" class="pp"/><rect x="488.35" y="294.3" width="16.7" height="8.7" class="pp"/><rect x="532.35" y="294.3" width="16.8" height="8.7" class="pp"/><rect x="488.35" y="281.9" width="16.7" height="8.7" class="pp"/><rect x="532.35" y="281.9" width="16.8" height="8.7" class="pp"/><path d="M504.25,298.65 L516.35,298.65 L528.65,311 L535.25,311" stroke-width="5.3"/><path d="M504.25,286.25 L516.35,286.25 L528.65,298.65 L535.25,298.65" stroke-width="5.3"/><path d="M536.25,286.25 L530.55,286.25 L505.05,259.15" stroke-width="5.8"/><rect x="501.05" y="251.6" width="8.8" height="13.9" class="pp"/><rect x="528.85" y="251.6" width="8.8" height="13.9" class="pp"/><path d="M533.15,224.8 L533.15,258.6" stroke-width="6"/><path d="M264.8,241.7 L533.15,241.7" stroke-width="7.3"/><path d="M384.2,158 L384.2,225" stroke-width="7.4"/><rect x="376.7" y="217.5" width="15" height="15" class="pp"/><rect x="376.7" y="250.6" width="15" height="15.1" class="pp"/><path d="M384.5,241.7 L384.5,258" stroke-width="6.6"/></g>
<circle cx="384.2" cy="225" r="2.5" fill="#000"/><circle cx="384.2" cy="258.3" r="2.5" fill="#000"/>
<path d="M379.2,279.6H389.6M384.4,274.4V284.8" stroke="#1e6cf6" stroke-width="1.6" fill="none"/>
<rect x="236.7" y="217.2" width="28.5" height="15" class="rs"/><rect x="246.4" y="222.5" width="9.8" height="4.2" class="rs"/><path d="M241.5,224.6h4.9M256.2,224.6h4.3" class="rs"/><rect x="236.7" y="251.2" width="28.5" height="15" class="rs"/><rect x="246.4" y="256.7" width="9.8" height="4.2" class="rs"/><path d="M241.5,258.8h4.9M256.2,258.8h4.3" class="rs"/><rect x="222.7" y="158.4" width="56.1" height="56.2" class="yb"/><rect x="222.7" y="270.4" width="56.1" height="56.2" class="yb"/><text class="lt" transform="translate(242.4,167.4) rotate(90) scale(0.72,1)">5050</text><text class="lt" transform="translate(259.9,318.8) rotate(-90) scale(0.72,1)">5050</text><rect x="326.15" y="217.2" width="28.5" height="15" class="rs"/><rect x="335.85" y="222.5" width="9.8" height="4.2" class="rs"/><path d="M330.95,224.6h4.9M345.65,224.6h4.3" class="rs"/><rect x="326.15" y="251.2" width="28.5" height="15" class="rs"/><rect x="335.85" y="256.7" width="9.8" height="4.2" class="rs"/><path d="M330.95,258.8h4.9M345.65,258.8h4.3" class="rs"/><rect x="312.15" y="158.4" width="56.1" height="56.2" class="yb"/><rect x="312.15" y="270.4" width="56.1" height="56.2" class="yb"/><text class="lt" transform="translate(331.85,167.4) rotate(90) scale(0.72,1)">5050</text><text class="lt" transform="translate(349.35,318.8) rotate(-90) scale(0.72,1)">5050</text><rect x="415.6" y="217.2" width="28.5" height="15" class="rs"/><rect x="425.3" y="222.5" width="9.8" height="4.2" class="rs"/><path d="M420.4,224.6h4.9M435.1,224.6h4.3" class="rs"/><rect x="415.6" y="251.2" width="28.5" height="15" class="rs"/><rect x="425.3" y="256.7" width="9.8" height="4.2" class="rs"/><path d="M420.4,258.8h4.9M435.1,258.8h4.3" class="rs"/><rect x="401.6" y="158.4" width="56.1" height="56.2" class="yb"/><rect x="401.6" y="270.4" width="56.1" height="56.2" class="yb"/><text class="lt" transform="translate(421.3,167.4) rotate(90) scale(0.72,1)">5050</text><text class="lt" transform="translate(438.8,318.8) rotate(-90) scale(0.72,1)">5050</text><rect x="505.05" y="217.2" width="28.5" height="15" class="rs"/><rect x="514.75" y="222.5" width="9.8" height="4.2" class="rs"/><path d="M509.85,224.6h4.9M524.55,224.6h4.3" class="rs"/><rect x="505.05" y="251.2" width="28.5" height="15" class="rs"/><rect x="514.75" y="256.7" width="9.8" height="4.2" class="rs"/><path d="M509.85,258.8h4.9M524.55,258.8h4.3" class="rs"/><rect x="491.05" y="158.4" width="56.1" height="56.2" class="yb"/><rect x="491.05" y="270.4" width="56.1" height="56.2" class="yb"/><text class="lt" transform="translate(510.75,167.4) rotate(90) scale(0.72,1)">5050</text><text class="lt" transform="translate(528.25,318.8) rotate(-90) scale(0.72,1)">5050</text>
<polygon points="194.3,157.5 216.8,135 553,135 575.4,157.4 575.4,325.6 553,348 217,348 194.3,325.5" fill="none" stroke="#e8141c" stroke-width="2"/></g><g stroke="#f2f2f2" fill="none"><path d="M868.7,556.5v4M868.7,563v4.5M868.7,571v40" stroke-width="1.7"/><path d="M865.3,585.3L855.2,591L865.3,596.8Z" stroke-width="1.5" stroke-dasharray="1.8 0.9"/><path d="M872.2,585.3L882.3,591L872.2,596.8Z" stroke-width="1.5" stroke-dasharray="1.8 0.9"/></g></svg>
<svg width="1022" height="680" viewBox="0 0 1022 680" style="position:absolute;left:0;top:0;pointer-events:none"><path d="M38.7,41V54.5M47.5,51.5V54.5M56.3,51.5V54.5M65.1,51.5V54.5M73.9,51.5V54.5M82.7,47.5V54.5M91.5,51.5V54.5M100.3,51.5V54.5M109.1,51.5V54.5M117.9,51.5V54.5M126.7,41V54.5M135.5,51.5V54.5M144.3,51.5V54.5M153.1,51.5V54.5M161.9,51.5V54.5M170.7,47.5V54.5M179.5,51.5V54.5M188.3,51.5V54.5M197.1,51.5V54.5M205.9,51.5V54.5M214.7,41V54.5M223.5,51.5V54.5M232.3,51.5V54.5M241.1,51.5V54.5M249.9,51.5V54.5M258.7,47.5V54.5M267.5,51.5V54.5M276.3,51.5V54.5M285.1,51.5V54.5M293.9,51.5V54.5M302.7,41V54.5M311.5,51.5V54.5M320.3,51.5V54.5M329.1,51.5V54.5M337.9,51.5V54.5M346.7,47.5V54.5M355.5,51.5V54.5M364.3,51.5V54.5M373.1,51.5V54.5M381.9,51.5V54.5M390.7,41V54.5M399.5,51.5V54.5M408.3,51.5V54.5M417.1,51.5V54.5M425.9,51.5V54.5M434.7,47.5V54.5M443.5,51.5V54.5M452.3,51.5V54.5M461.1,51.5V54.5M469.9,51.5V54.5M478.7,41V54.5M487.5,51.5V54.5M496.3,51.5V54.5M505.1,51.5V54.5M513.9,51.5V54.5M522.7,47.5V54.5M531.5,51.5V54.5M540.3,51.5V54.5M549.1,51.5V54.5M557.9,51.5V54.5M566.7,41V54.5M575.5,51.5V54.5M584.3,51.5V54.5M593.1,51.5V54.5M601.9,51.5V54.5M610.7,47.5V54.5M619.5,51.5V54.5M628.3,51.5V54.5M637.1,51.5V54.5M645.9,51.5V54.5M654.7,41V54.5M663.5,51.5V54.5M672.3,51.5V54.5M681.1,51.5V54.5M689.9,51.5V54.5M698.7,47.5V54.5M707.5,51.5V54.5M716.3,51.5V54.5M725.1,51.5V54.5M733.9,51.5V54.5M742.7,41V54.5M751.5,51.5V54.5M760.3,51.5V54.5M769.1,51.5V54.5M777.9,51.5V54.5M786.7,47.5V54.5M795.5,51.5V54.5M804.3,51.5V54.5M813.1,51.5V54.5M821.9,51.5V54.5M830.7,41V54.5M839.5,51.5V54.5M848.3,51.5V54.5M857.1,51.5V54.5M865.9,51.5V54.5M874.7,47.5V54.5M883.5,51.5V54.5M892.3,51.5V54.5M901.1,51.5V54.5M909.9,51.5V54.5M918.7,41V54.5M927.5,51.5V54.5M936.3,51.5V54.5M945.1,51.5V54.5M21,598H37M33,589.2H37M33,580.4H37M33,571.6H37M33,562.8H37M29,554H37M33,545.2H37M33,536.4H37M33,527.6H37M33,518.8H37M21,510H37M33,501.2H37M33,492.4H37M33,483.6H37M33,474.8H37M29,466H37M33,457.2H37M33,448.4H37M33,439.6H37M33,430.8H37M21,422H37M33,413.2H37M33,404.4H37M33,395.6H37M33,386.8H37M29,378H37M33,369.2H37M33,360.4H37M33,351.6H37M33,342.8H37M21,334H37M33,325.2H37M33,316.4H37M33,307.6H37M33,298.8H37M29,290H37M33,281.2H37M33,272.4H37M33,263.6H37M33,254.8H37M21,246H37M33,237.2H37M33,228.4H37M33,219.6H37M33,210.8H37M29,202H37M33,193.2H37M33,184.4H37M33,175.6H37M33,166.8H37M21,158H37M33,149.2H37M33,140.4H37M33,131.6H37M33,122.8H37M29,114H37M33,105.2H37M33,96.4H37M33,87.6H37M33,78.8H37M21,70H37M33,61.2H37M33,606.8H37" stroke="#000" stroke-width="1.15" fill="none" stroke-opacity="0.95"/><g font-family="Liberation Sans, sans-serif" font-size="10px" fill="#000"><text x="42.3" y="48.6">0</text><text x="130.3" y="48.6">10</text><text x="218.3" y="48.6">20</text><text x="306.3" y="48.6">30</text><text x="394.3" y="48.6">40</text><text x="482.3" y="48.6">50</text><text x="570.3" y="48.6">60</text><text x="658.3" y="48.6">70</text><text x="746.3" y="48.6">80</text><text x="834.3" y="48.6">90</text><text x="922.3" y="48.6">100</text><text transform="translate(29,614) rotate(-90)">30</text><text transform="translate(29,526) rotate(-90)">40</text><text transform="translate(29,438) rotate(-90)">50</text><text transform="translate(29,350) rotate(-90)">60</text><text transform="translate(29,262) rotate(-90)">70</text><text transform="translate(29,174) rotate(-90)">80</text><text transform="translate(29,86) rotate(-90)">90</text><text x="18.6" y="48.4" font-size="10.8px">мм</text></g></svg>
<div class="abs" id="vs"></div><div class="abs sbtn" style="left:946px;top:57px;width:13px;height:14px"></div><svg class="abs" style="left:949.5px;top:62.5px" width="8" height="5"><path d="M0.3,4.5L4,0.6L7.7,4.5L6.5,4.5L4,2.6L1.5,4.5Z" fill="#3a3a3a"/><path d="M1.5,4.5L4,2.6L6.5,4.5Z" fill="#8a8a8a"/></svg><div class="abs sbtn" style="left:946px;top:595px;width:13px;height:13.5px"></div><svg class="abs" style="left:949.5px;top:600px" width="8" height="5"><path d="M0.3,0.5L4,4.4L7.7,0.5Z" fill="#4a4a4a"/></svg><div class="abs" id="vth"></div><svg class="abs" style="left:949px;top:276px" width="9" height="9"><path d="M0.5,1H8M0.5,4H8M0.5,7H8" stroke="#2a6a9a" stroke-width="1.2"/></svg><div class="abs" id="hs"></div><div class="abs" style="left:37px;top:611px;width:1px;height:17px;background:#8a8a8a"></div><svg class="abs" style="left:43.5px;top:615px" width="6" height="9"><path d="M5,0.3L0.5,4.5L5,8.7Z" fill="#3a3a3a"/></svg><svg class="abs" style="left:934px;top:615px" width="6" height="9"><path d="M1,0.3L5.5,4.5L1,8.7Z" fill="#3a3a3a"/></svg><div class="abs" id="hth"></div><svg class="abs" style="left:332px;top:615px" width="9" height="9"><path d="M1.5,0.5V8M4.5,0.5V8M7.5,0.5V8" stroke="#6a6a6a" stroke-width="1.1"/></svg>
<div class="abs" id="rpl0"></div><div class="abs" id="rpl"></div><div class="abs" id="rp"></div><div class="abs" id="rpt"><span>Свойства</span></div><div class="rl" style="left:969px;top:68.5px;font-weight:bold;letter-spacing:0">1 Текст</div><div class="abs" style="left:966px;top:85px;width:56px;height:1px;background:#9c9fa8"></div><div class="abs" style="left:966px;top:86px;width:56px;height:1px;background:#f4f5fa"></div><div class="abs" style="left:970px;top:97.5px;width:60px;height:19px;background:#fff;border-radius:2px;box-shadow:0 0 0 1px #dfe3ee"></div><div class="rl" style="left:974px;top:99.5px;font-size:13px;line-height:15px">+</div><div class="rl" style="left:969.5px;top:130px">Высота:</div><div class="abs" style="left:970.5px;top:146px;width:42.5px;height:14px;background:#000;box-shadow:1px 1px 0 #fff"></div><div class="rl" style="left:970.5px;top:146.5px;width:40px;text-align:right;color:#f2f240;font-size:11.5px">2.0</div><div class="abs" style="left:1017px;top:148px;width:2px;height:10px;background:#444;border-radius:1px"></div><div class="abs" style="left:1020.5px;top:148px;width:2px;height:10px;background:#444;border-radius:1px"></div><div class="abs" style="left:970px;top:173.5px;width:60px;height:35px;border:1px solid #6e6e74;background:#d9ddec"></div><div class="rl" style="left:975.5px;top:179px">Эффективная</div><div class="rl" style="left:975.5px;top:193px">0,222 мм</div><div class="gb" style="left:970.5px;top:227px;width:60px;height:83px"></div><div class="gl" style="left:976.5px;top:222.5px">Повернуть</div><div class="abs" style="left:977.5px;top:241.5px;width:40.5px;height:19.5px;background:#fff;box-shadow:0 0 0 1px #e2e5ee"></div><div class="rl" style="left:979.5px;top:244px">0</div><div class="abs" style="left:1018px;top:242px;width:6px;height:9px;background:linear-gradient(#f4f4f4,#d4d4d4);border:1px solid #a0a0a0"></div><div class="abs" style="left:1018px;top:252px;width:6px;height:8px;background:linear-gradient(#f4f4f4,#d4d4d4);border:1px solid #a0a0a0"></div><div class="rl" style="left:985.5px;top:269px">0°</div><div class="rl" style="left:1012.8px;top:269px">90°</div><div class="rl" style="left:981px;top:287.5px">180°</div><div class="rl" style="left:1010px;top:287.5px">270°</div><div class="gb" style="left:970.5px;top:325px;width:60px;height:48.5px"></div><div class="gl" style="left:976.5px;top:319.5px">Отразить</div><div class="cb" style="left:976.5px;top:337px"></div><div class="rl" style="left:991.5px;top:338px">по горизонтали</div><div class="cb" style="left:976.5px;top:355px"></div><div class="rl" style="left:991.5px;top:356px">по вертикали</div><div class="gb" style="left:970.5px;top:391px;width:60px;height:65px"></div><div class="gl" style="left:976.5px;top:386px">Ширина</div><div class="rb" style="left:977.2px;top:405.1px"></div><div class="rl" style="left:993.5px;top:406.0px">Меньше</div><div class="rb on" style="left:977.2px;top:421.3px"></div><div class="rl" style="left:993.5px;top:422.2px">Нормально</div><div class="rb" style="left:977.2px;top:437.5px"></div><div class="rl" style="left:993.5px;top:438.4px">Больше</div><div class="gb" style="left:970.5px;top:475px;width:60px;height:66px"></div><div class="gl" style="left:976.5px;top:469.5px">Толщина</div><div class="rb" style="left:977.2px;top:489.7px"></div><div class="rl" style="left:993.5px;top:490.6px">Меньше</div><div class="rb on" style="left:977.2px;top:505.7px"></div><div class="rl" style="left:993.5px;top:506.6px">Нормально</div><div class="rb" style="left:977.2px;top:521.7px"></div><div class="rl" style="left:993.5px;top:522.6px">Больше</div><div class="cb" style="left:979px;top:555px"></div><div class="rl" style="left:994.3px;top:556px">Вырезать</div><svg class="abs" style="left:966px;top:370px" width="30" height="36" viewBox="966 370 30 36"><g fill="#e9e9ec" fill-opacity="0.45" stroke="#8c8c90" stroke-opacity="0.8" stroke-width="1"><rect x="976.5" y="372.5" width="10.5" height="31" rx="5"/><path d="M978.5,378.5h6.5M978.5,383h6.5M978.5,399.5h6.5M978.5,395h6.5" fill="none"/><path d="M974,383.5L967.5,388.5L974,393.5Z"/><path d="M989.5,383.5L996,388.5L989.5,393.5Z"/></g></svg>
<div class="abs" id="frm"></div><div class="abs" id="tabs"></div><svg class="abs" style="left:0;top:626px" width="120" height="26" viewBox="0 626 120 26"><path d="M12.5,626V629.3Q12.5,630.3 14,630.3H19Q21,630.5 21.8,633.5L25.2,645.5Q25.6,647 27,647H70Q71.4,647 71.8,645.5L75.6,630.5" fill="#f4f4f4" stroke="#7c7c7c" stroke-width="1.1"/></svg><div class="rl" style="left:27.3px;top:633px;letter-spacing:0">Плата 1</div><div class="abs" id="bot"></div><div class="abs" style="left:0;top:650px;width:1022px;height:1px;background:#d9d9d9"></div><div class="abs" style="left:5px;top:651.5px;width:169px;height:30px;border:1px solid #c4c4c4;border-right:none;background:#f4f4f4"></div><div class="rl" style="left:7px;top:654px;letter-spacing:0">видимая</div><div class="abs" style="left:5px;top:669.5px;width:169px;height:1px;background:#c4c4c4"></div><div class="abs" style="left:53.8px;top:652.2px;width:120px;height:17.2px;background:#000"></div><div class="rl" style="left:57.5px;top:653.5px;font-weight:bold;font-size:12.5px;line-height:15px;color:#2a74f0">Ф1</div><div class="rl" style="left:81.0px;top:653.5px;font-weight:bold;font-size:12.5px;line-height:15px;color:#ee1414">Ш1</div><div class="rl" style="left:105.3px;top:653.5px;font-weight:bold;font-size:12.5px;line-height:15px;color:#18a818">Ф2</div><div class="rl" style="left:128.8px;top:653.5px;font-weight:bold;font-size:12.5px;line-height:15px;color:#e8dc28">Ш2</div><div class="rl" style="left:158.0px;top:653.5px;font-weight:bold;font-size:12.5px;line-height:15px;color:#ffffff">К</div><div class="abs" style="left:53.8px;top:670px;width:1px;height:10px;background:#c4c4c4"></div><div class="abs" style="left:77.6px;top:670px;width:1px;height:10px;background:#c4c4c4"></div><div class="abs" style="left:101.4px;top:670px;width:1px;height:10px;background:#c4c4c4"></div><div class="abs" style="left:125.2px;top:670px;width:1px;height:10px;background:#c4c4c4"></div><div class="abs" style="left:149.0px;top:670px;width:1px;height:10px;background:#c4c4c4"></div><div class="abs" style="left:173.4px;top:670px;width:1px;height:10px;background:#c4c4c4"></div><div class="abs" style="left:60.5px;top:673.5px;width:9px;height:9px;border-radius:50%;border:1px solid #9a9a9a;background:#f6f6f6"></div><div class="abs" style="left:84.3px;top:673.5px;width:9px;height:9px;border-radius:50%;border:1px solid #9a9a9a;background:#f6f6f6"></div><div class="abs" style="left:108.1px;top:673.5px;width:9px;height:9px;border-radius:50%;border:1px solid #9a9a9a;background:#f6f6f6"></div><div class="abs" style="left:131.9px;top:673.5px;width:9px;height:9px;border-radius:50%;border:1px solid #9a9a9a;background:#f6f6f6"></div><div class="abs" style="left:155.8px;top:673.5px;width:9px;height:9px;border-radius:50%;border:1px solid #9a9a9a;background:#f6f6f6"></div><div class="rl" style="left:178px;top:666.5px">?</div><div class="bx" style="left:193px;width:89px;background:#f8f8f8"></div><svg class="abs" style="left:198px;top:656px" width="28" height="24" viewBox="198 656 28 24"><rect x="198.8" y="657" width="25.8" height="24" fill="#0c0c84"/><g fill="none" stroke="#fff" stroke-width="2.2"><path d="M198,661.3H204.5L215,671.8V680M198,667.3H203.5L209,672.7"/></g><circle cx="214.6" cy="674.3" r="3.6" fill="#0c0c84" stroke="#fff" stroke-width="2.2"/><g fill="none" stroke="#000" stroke-width="1.1"><path d="M198,659.5H205.2L216.6,671M198,663.1H203.8L206,665.3M198,665.6H203L206,668.6M198,669H202.8L207,673.2"/></g></svg><div class="abs" style="left:233.3px;top:654.3px;width:34.7px;height:15.2px;background:#f01010;box-shadow:1px 1px 0 #fff,-1px -1px 0 #b8b8b8"></div><div class="rl" style="left:233.3px;top:655px;width:33px;text-align:right;color:#fff;font-size:12.5px;line-height:15px">0.7</div><div class="abs" style="left:272.3px;top:657px;width:1.8px;height:10px;background:#3c3c3c;border-radius:1px"></div><div class="abs" style="left:275.4px;top:657px;width:1.8px;height:10px;background:#3c3c3c;border-radius:1px"></div><div class="abs" style="left:235px;top:674px;width:13.5px;height:6px;border:1px dotted #000;border-bottom:none"></div><div class="abs" style="left:260.5px;top:674px;width:4px;height:6px;border:1px dotted #000;border-bottom:none"></div><div class="bx" style="left:286.6px;width:36px"></div><svg class="abs" style="left:288px;top:652px" width="34" height="28" viewBox="288 652 34 28"><circle cx="303.7" cy="669" r="6.2" fill="#000"/><circle cx="303.7" cy="669" r="1.6" fill="#f1f1f1"/><path d="M291.5,668H316.5M291.5,670.4H316.5M302.6,656V681M304.9,656V681" stroke="#e01010" stroke-width="1"/><path d="M291.5,669.2H316.5M303.75,656V681" stroke="#fff" stroke-width="0.9"/></svg><div class="bx" style="left:327.4px;width:36px"></div><svg class="abs" style="left:329px;top:652px" width="34" height="28" viewBox="329 652 34 28"><path d="M337,678C333,676 335,671 340,670C345,669 346,664 351,662C355,660.5 359,663 357,667C355,671 349,671 346,675C344,678 340,679.5 337,678Z" fill="none" stroke="#5c5c5c" stroke-width="2.6"/><path d="M334,660L353,680M357,659L338,680" stroke="#e01010" stroke-width="1.6"/></svg><div class="bx" style="left:368px;width:660px"></div><div class="abs" style="left:375px;top:667.5px;width:650px;height:1px;background:#a8a8a8"></div><div class="abs" style="left:375px;top:668.5px;width:650px;height:1px;background:#fcfcfc"></div><div class="abs" style="left:85px;top:677px;width:940px;height:3px;background:#fbfbfb"></div>
</body></html>
